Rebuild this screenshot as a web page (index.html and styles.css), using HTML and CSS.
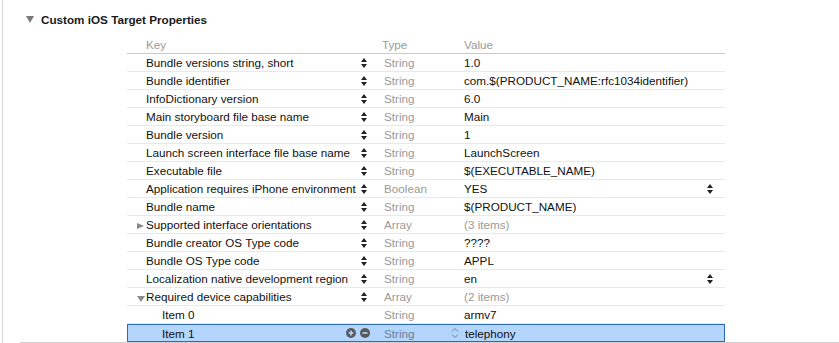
FILE: index.html
```html
<!doctype html>
<html>
  <head>
    <meta charset="utf-8" />
    <title>Custom iOS Target Properties</title>
    <link rel="stylesheet" href="styles.css">
  </head>
  <body>
    <div class="panel">
      <div class="section">
        <div class="section-title">
          <svg class="disclosure big" width="8" height="7" viewBox="0 0 8 7"><path d="M0 0H8L4 7Z" fill="#7b7b7b"/></svg>
          <span>Custom iOS Target Properties</span>
        </div>
        <div class="plist">
          <div class="row head">
            <div class="key">Key</div><div class="ctl"></div><div class="type">Type</div><div class="value">Value</div>
          </div>
          <div class="row">
            <div class="key">Bundle versions string, short</div><div class="ctl"><i class="step"></i></div><div class="type">String</div><div class="value">1.0</div>
          </div>
          <div class="row">
            <div class="key">Bundle identifier</div><div class="ctl"><i class="step"></i></div><div class="type">String</div><div class="value">com.$(PRODUCT_NAME:rfc1034identifier)</div>
          </div>
          <div class="row">
            <div class="key">InfoDictionary version</div><div class="ctl"><i class="step"></i></div><div class="type">String</div><div class="value">6.0</div>
          </div>
          <div class="row">
            <div class="key">Main storyboard file base name</div><div class="ctl"><i class="step"></i></div><div class="type">String</div><div class="value">Main</div>
          </div>
          <div class="row">
            <div class="key">Bundle version</div><div class="ctl"><i class="step"></i></div><div class="type">String</div><div class="value">1</div>
          </div>
          <div class="row">
            <div class="key">Launch screen interface file base name</div><div class="ctl"><i class="step"></i></div><div class="type">String</div><div class="value">LaunchScreen</div>
          </div>
          <div class="row">
            <div class="key">Executable file</div><div class="ctl"><i class="step"></i></div><div class="type">String</div><div class="value">$(EXECUTABLE_NAME)</div>
          </div>
          <div class="row">
            <div class="key">Application requires iPhone environment</div><div class="ctl"><i class="step"></i></div><div class="type">Boolean</div><div class="value">YES<i class="step"></i></div>
          </div>
          <div class="row">
            <div class="key">Bundle name</div><div class="ctl"><i class="step"></i></div><div class="type">String</div><div class="value">$(PRODUCT_NAME)</div>
          </div>
          <div class="row">
            <div class="key"><span class="tri right"></span>Supported interface orientations</div><div class="ctl"><i class="step"></i></div><div class="type">Array</div><div class="value muted">(3 items)</div>
          </div>
          <div class="row">
            <div class="key">Bundle creator OS Type code</div><div class="ctl"><i class="step"></i></div><div class="type">String</div><div class="value">????</div>
          </div>
          <div class="row">
            <div class="key">Bundle OS Type code</div><div class="ctl"><i class="step"></i></div><div class="type">String</div><div class="value">APPL</div>
          </div>
          <div class="row">
            <div class="key">Localization native development region</div><div class="ctl"><i class="step"></i></div><div class="type">String</div><div class="value">en<i class="step"></i></div>
          </div>
          <div class="row">
            <div class="key"><span class="tri down"></span>Required device capabilities</div><div class="ctl"><i class="step"></i></div><div class="type">Array</div><div class="value muted">(2 items)</div>
          </div>
          <div class="row">
            <div class="key child">Item 0</div><div class="ctl"></div><div class="type">String</div><div class="value">armv7</div>
          </div>
          <div class="row selected">
            <div class="key child">Item 1</div>
            <div class="ctl">
              <svg class="btn" width="10" height="10" viewBox="0 0 10 10"><circle cx="5" cy="5" r="5" fill="#5a5a5a"/><path d="M2.5 5H7.5M5 2.5V7.5" stroke="#b4d5fe" stroke-width="1.6"/></svg>
              <svg class="btn" width="10" height="10" viewBox="0 0 10 10"><circle cx="5" cy="5" r="5" fill="#5a5a5a"/><path d="M2.5 5H7.5" stroke="#b4d5fe" stroke-width="1.6"/></svg>
            </div>
            <div class="type">String<svg class="chev" width="8" height="12" viewBox="0 0 8 12"><path d="M1 4.5L4 1.5L7 4.5M1 7.5L4 10.5L7 7.5" fill="none" stroke="#6f8197" stroke-width="1"/></svg></div>
            <div class="value">telephony</div>
          </div>
        </div>
      </div>
    </div>
  </body>
</html>
```

FILE: styles.css
```css
* { margin: 0; padding: 0; box-sizing: border-box; }
body { margin: 0; background: #fff; color: #111; font-family: "Liberation Sans", Arial, sans-serif; font-size: 11.7px; }
.panel { margin-left: 2px; border-left: 1px solid #d6d6d6; height: 343px; }
.section { margin-left: 17px; border-bottom: 1px solid #d0d0d0; }
.section-title { display: flex; align-items: center; height: 36px; padding: 2px 0 0 6px; font-weight: bold; font-size: 11.7px; color: #1a1a1a; }
.section-title span { margin-left: 7px; }
.plist { margin-left: 107px; width: 598px; }
.row { display: grid; grid-template-columns: 216px 30px 88px 264px; height: 18px; border-bottom: 1px solid #e9e9e9; align-items: center; }
.row.head { border-bottom-color: #cacaca; color: #9a9a9a; }
.row.head .type { padding-left: 9px; }
.key { padding-left: 19px; position: relative; white-space: nowrap; }
.key.child { padding-left: 35px; }
.ctl { display: flex; justify-content: flex-end; align-items: center; padding-right: 6px; gap: 4px; }
.type { padding-left: 11px; color: #9a9a9a; display: flex; align-items: center; justify-content: space-between; padding-right: 3px; }
.value { padding-left: 3px; display: flex; justify-content: space-between; align-items: center; padding-right: 12px; }
.value.muted { color: #9a9a9a; }
.step { display: block; width: 6px; height: 10px; position: relative; }
.step::before, .step::after { content: ""; position: absolute; left: 0; border-left: 3px solid transparent; border-right: 3px solid transparent; }
.step::before { top: 0; border-bottom: 4px solid #222; }
.step::after { bottom: 0; border-top: 4px solid #222; }
.tri { position: absolute; top: 5px; }
.tri.right { left: 10px; border-top: 3.5px solid transparent; border-bottom: 3.5px solid transparent; border-left: 7px solid #8a8a8a; }
.tri.down { left: 10px; top: 6px; border-left: 4.5px solid transparent; border-right: 4.5px solid transparent; border-top: 6px solid #8a8a8a; }
.row.selected { background: #b4d5fe; border: 1px solid #2b6cb3; }
.row.selected .key { padding-left: 34px; }
.row.selected .ctl { padding-right: 4px; }
.row.selected .type { color: #6f8197; padding-left: 10px; }
.row.selected .value { padding-left: 3px; }
.btn { display: block; }
.chev { display: block; }
```
